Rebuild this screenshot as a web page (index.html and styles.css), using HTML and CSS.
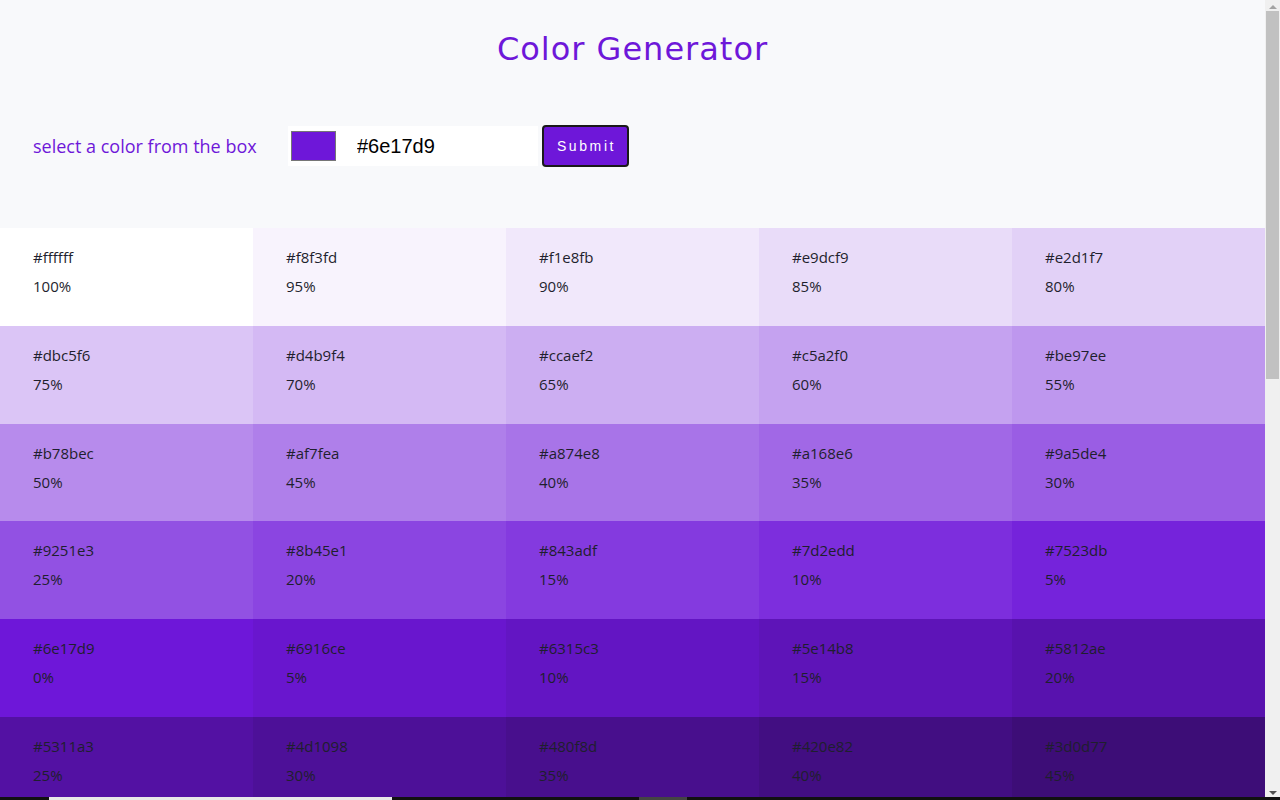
FILE: index.html
```html
<!DOCTYPE html>
<html lang="en">
<head>
<meta charset="utf-8">
<title>Color Generator</title>
<link rel="stylesheet" href="styles.css">
</head>
<body>
<div class="page">
<header class="top">
  <h1 class="title">Color Generator</h1>
  <form class="picker-row">
    <label class="picker-label" for="hex">select a color from the box</label>
    <div class="picker">
      <span class="swatch"></span>
      <input class="hex-input" id="hex" type="text" value="#6e17d9">
    </div>
    <button class="submit" type="button">Submit</button>
  </form>
</header>
<section class="colors">
  <article class="color" style="background:#ffffff"><p class="hex">#ffffff</p><p class="pct">100%</p></article>
  <article class="color" style="background:#f8f3fd"><p class="hex">#f8f3fd</p><p class="pct">95%</p></article>
  <article class="color" style="background:#f1e8fb"><p class="hex">#f1e8fb</p><p class="pct">90%</p></article>
  <article class="color" style="background:#e9dcf9"><p class="hex">#e9dcf9</p><p class="pct">85%</p></article>
  <article class="color" style="background:#e2d1f7"><p class="hex">#e2d1f7</p><p class="pct">80%</p></article>
  <article class="color" style="background:#dbc5f6"><p class="hex">#dbc5f6</p><p class="pct">75%</p></article>
  <article class="color" style="background:#d4b9f4"><p class="hex">#d4b9f4</p><p class="pct">70%</p></article>
  <article class="color" style="background:#ccaef2"><p class="hex">#ccaef2</p><p class="pct">65%</p></article>
  <article class="color" style="background:#c5a2f0"><p class="hex">#c5a2f0</p><p class="pct">60%</p></article>
  <article class="color" style="background:#be97ee"><p class="hex">#be97ee</p><p class="pct">55%</p></article>
  <article class="color" style="background:#b78bec"><p class="hex">#b78bec</p><p class="pct">50%</p></article>
  <article class="color" style="background:#af7fea"><p class="hex">#af7fea</p><p class="pct">45%</p></article>
  <article class="color" style="background:#a874e8"><p class="hex">#a874e8</p><p class="pct">40%</p></article>
  <article class="color" style="background:#a168e6"><p class="hex">#a168e6</p><p class="pct">35%</p></article>
  <article class="color" style="background:#9a5de4"><p class="hex">#9a5de4</p><p class="pct">30%</p></article>
  <article class="color" style="background:#9251e3"><p class="hex">#9251e3</p><p class="pct">25%</p></article>
  <article class="color" style="background:#8b45e1"><p class="hex">#8b45e1</p><p class="pct">20%</p></article>
  <article class="color" style="background:#843adf"><p class="hex">#843adf</p><p class="pct">15%</p></article>
  <article class="color" style="background:#7d2edd"><p class="hex">#7d2edd</p><p class="pct">10%</p></article>
  <article class="color" style="background:#7523db"><p class="hex">#7523db</p><p class="pct">5%</p></article>
  <article class="color" style="background:#6e17d9"><p class="hex">#6e17d9</p><p class="pct">0%</p></article>
  <article class="color" style="background:#6916ce"><p class="hex">#6916ce</p><p class="pct">5%</p></article>
  <article class="color" style="background:#6315c3"><p class="hex">#6315c3</p><p class="pct">10%</p></article>
  <article class="color" style="background:#5e14b8"><p class="hex">#5e14b8</p><p class="pct">15%</p></article>
  <article class="color" style="background:#5812ae"><p class="hex">#5812ae</p><p class="pct">20%</p></article>
  <article class="color" style="background:#5311a3"><p class="hex">#5311a3</p><p class="pct">25%</p></article>
  <article class="color" style="background:#4d1098"><p class="hex">#4d1098</p><p class="pct">30%</p></article>
  <article class="color" style="background:#480f8d"><p class="hex">#480f8d</p><p class="pct">35%</p></article>
  <article class="color" style="background:#420e82"><p class="hex">#420e82</p><p class="pct">40%</p></article>
  <article class="color" style="background:#3d0d77"><p class="hex">#3d0d77</p><p class="pct">45%</p></article>
  <article class="color" style="background:#370c6d"><p class="hex">#370c6d</p><p class="pct">50%</p></article>
  <article class="color" style="background:#320a62"><p class="hex">#320a62</p><p class="pct">55%</p></article>
  <article class="color" style="background:#2c0957"><p class="hex">#2c0957</p><p class="pct">60%</p></article>
  <article class="color" style="background:#27084c"><p class="hex">#27084c</p><p class="pct">65%</p></article>
  <article class="color" style="background:#210741"><p class="hex">#210741</p><p class="pct">70%</p></article>
  <article class="color" style="background:#1c0636"><p class="hex">#1c0636</p><p class="pct">75%</p></article>
  <article class="color" style="background:#16052b"><p class="hex">#16052b</p><p class="pct">80%</p></article>
  <article class="color" style="background:#110321"><p class="hex">#110321</p><p class="pct">85%</p></article>
  <article class="color" style="background:#0b0216"><p class="hex">#0b0216</p><p class="pct">90%</p></article>
  <article class="color" style="background:#06010b"><p class="hex">#06010b</p><p class="pct">95%</p></article>
  <article class="color" style="background:#000000"><p class="hex">#000000</p><p class="pct">100%</p></article>
</section>
</div>
<div class="scrollbar" aria-hidden="true">
  <span class="sb-arrow sb-up"></span>
  <span class="sb-thumb"></span>
  <span class="sb-arrow sb-down"></span>
</div>
<div class="edge-strip"><span class="edge-light"></span><span class="edge-gray"></span></div>
</body>
</html>
```
FILE: styles.css
```css
* { box-sizing: border-box; }

html, body {
  margin: 0;
  padding: 0;
}

body {
  background: #f8f9fb;
  font-family: "Open Sans", "Noto Sans", sans-serif;
  color: #222;
}

.page {
  margin-right: 15px;
}

.top {
  display: flex;
  flex-direction: column;
  padding: 28px 0 61px;
}

.title {
  margin: 0;
  text-align: center;
  font-family: "DejaVu Sans", Verdana, sans-serif;
  font-weight: 400;
  font-size: 32px;
  line-height: 42px;
  letter-spacing: 1px;
  color: #6e17d9;
}

.picker-row {
  display: flex;
  align-items: center;
  margin: 55px 0 0;
  padding-left: 33px;
}

.picker-label {
  font-family: "Open Sans", "Noto Sans", sans-serif;
  font-size: 18px;
  font-weight: 500;
  color: #6e17d9;
  width: 255px;
}

.picker {
  display: flex;
  align-items: center;
  width: 250px;
  height: 40px;
  background: #ffffff;
}

.swatch {
  display: block;
  width: 45px;
  height: 30px;
  margin-left: 3px;
  background: #6e17d9;
  border: 1px solid #767676;
}

.hex-input {
  border: 0;
  outline: none;
  background: transparent;
  width: 180px;
  padding: 0;
  margin-left: 21px;
  font-family: "Liberation Sans", Arial, sans-serif;
  font-size: 20px;
  color: #000;
}

.submit {
  margin-left: 4px;
  width: 87px;
  height: 42px;
  padding: 0 0 0 2px;
  background: #6e17d9;
  color: #ffffff;
  border: 2px solid #1a1a1a;
  border-radius: 4px;
  font-family: "Liberation Sans", Arial, sans-serif;
  font-size: 14px;
  letter-spacing: 2.6px;
}

.colors {
  display: grid;
  grid-template-columns: repeat(5, 1fr);
  grid-auto-rows: 97.8px;
}

.color {
  padding: 19px 20px 0 33px;
}

.hex, .pct {
  margin: 0;
  font-size: 15px;
  line-height: 21px;
  color: #1f1f2e;
}

.pct {
  margin-top: 8px;
}

/* window scrollbar, drawn over the right edge */
.scrollbar {
  position: fixed;
  top: 0;
  right: 0;
  bottom: 0;
  width: 15px;
  background: #f0f0f0;
  display: flex;
  flex-direction: column;
  align-items: center;
}

.sb-arrow {
  display: block;
  width: 0;
  height: 0;
  border-left: 4px solid transparent;
  border-right: 4px solid transparent;
}

.sb-up {
  margin-top: 5px;
  border-bottom: 4px solid #a3a3a3;
}

.sb-thumb {
  display: block;
  width: 13px;
  height: 368px;
  margin-top: 2px;
  background: #c1c1c1;
}

.sb-down {
  margin-top: auto;
  margin-bottom: 5px;
  border-top: 4px solid #505050;
}

.edge-strip {
  position: fixed;
  left: 0;
  right: 0;
  bottom: 0;
  height: 3px;
  background: #111;
  display: flex;
}

.edge-light {
  display: block;
  margin-left: 49px;
  width: 343px;
  background: #e8e8e8;
}

.edge-gray {
  display: block;
  margin-left: 247px;
  width: 48px;
  background: #444;
}
```
